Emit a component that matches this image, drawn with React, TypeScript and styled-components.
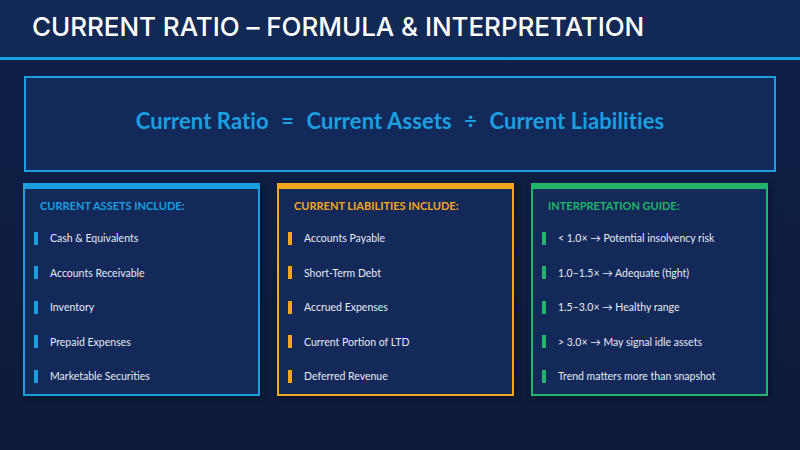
import styled, { createGlobalStyle } from "styled-components";

type Tone = "blue" | "orange" | "green";

const tones: Record<Tone, string> = {
  blue: "#1a9fe0",
  orange: "#f5a71c",
  green: "#22b468",
};

const columns: { tone: Tone; title: string; items: string[] }[] = [
  {
    tone: "blue",
    title: "CURRENT ASSETS INCLUDE:",
    items: [
      "Cash & Equivalents",
      "Accounts Receivable",
      "Inventory",
      "Prepaid Expenses",
      "Marketable Securities",
    ],
  },
  {
    tone: "orange",
    title: "CURRENT LIABILITIES INCLUDE:",
    items: [
      "Accounts Payable",
      "Short-Term Debt",
      "Accrued Expenses",
      "Current Portion of LTD",
      "Deferred Revenue",
    ],
  },
  {
    tone: "green",
    title: "INTERPRETATION GUIDE:",
    items: [
      "< 1.0× → Potential insolvency risk",
      "1.0–1.5× → Adequate (tight)",
      "1.5–3.0× → Healthy range",
      "> 3.0× → May signal idle assets",
      "Trend matters more than snapshot",
    ],
  },
];

export default function App() {
  return (
    <>
      <GlobalStyle />
      <Slide>
        <Header>
          <Title>CURRENT RATIO – FORMULA &amp; INTERPRETATION</Title>
        </Header>
        <Body>
          <FormulaBox>
            <Formula>
              Current Ratio <Op>=</Op> Current Assets <Op>÷</Op> Current Liabilities
            </Formula>
          </FormulaBox>
          <Cards>
            {columns.map(col => (
              <Card key={col.title} $tone={col.tone}>
                <CardTitle $tone={col.tone}>{col.title}</CardTitle>
                <List>
                  {col.items.map(item => (
                    <Item key={item}>
                      <Marker $tone={col.tone} />
                      <span>{item}</span>
                    </Item>
                  ))}
                </List>
              </Card>
            ))}
          </Cards>
        </Body>
      </Slide>
    </>
  );
}

const GlobalStyle = createGlobalStyle`
  html, body {
    margin: 0;
    padding: 0;
    background: #0e1b3a;
  }
  * { box-sizing: border-box; }
`;

const Slide = styled.div`
  width: 800px;
  height: 450px;
  overflow: hidden;
  display: flex;
  flex-direction: column;
  background: linear-gradient(180deg, #10204a 0%, #0d1b3a 100%);
  font-family: Lato, "Open Sans", sans-serif;
`;

const Header = styled.header`
  height: 60px;
  display: flex;
  align-items: center;
  padding: 0 0 4px 32px;
  background: #132955;
  border-bottom: 3px solid #1a9fe0;
`;

const Title = styled.h1`
  margin: 0;
  color: #ffffff;
  font-family: Inter, "Open Sans", sans-serif;
  font-size: 26px;
  font-weight: 500;
  letter-spacing: -0.05px;
`;

const Body = styled.main`
  display: flex;
  flex-direction: column;
  gap: 11px;
  padding: 16px 24px 0 23px;
`;

const FormulaBox = styled.section`
  height: 96px;
  margin-left: 1px;
  display: flex;
  align-items: center;
  justify-content: center;
  background: #13295a;
  border: 2px solid #1a9fe0;
  padding-bottom: 8px;
`;

const Formula = styled.div`
  color: #1a9fe0;
  font-size: 22px;
  font-weight: 700;
  white-space: pre;
  letter-spacing: 0.1px;
`;

const Op = styled.span`
  margin: 0 7px;
`;

const Cards = styled.div`
  display: grid;
  grid-template-columns: repeat(3, 237px);
  gap: 17px;
`;

const Card = styled.section<{ $tone: Tone }>`
  height: 213px;
  background: #13295a;
  border: 2px solid ${({ $tone }) => tones[$tone]};
  border-top: 6px solid ${({ $tone }) => tones[$tone]};
  padding: 8px 0 0 9px;
  box-shadow: 2px 2px 6px rgba(0, 0, 0, 0.35);
`;

const CardTitle = styled.h2<{ $tone: Tone }>`
  margin: 0 0 0 6px;
  color: ${({ $tone }) => tones[$tone]};
  font-size: 11px;
  font-weight: 700;
  line-height: 18px;
`;

const List = styled.ul`
  list-style: none;
  margin: 16px 0 0;
  padding: 0;
  display: flex;
  flex-direction: column;
  gap: 20.5px;
`;

const Item = styled.li`
  display: flex;
  align-items: center;
  gap: 12px;
  height: 14px;
  color: #e6ebf5;
  font-size: 10.5px;
`;

const Marker = styled.i<{ $tone: Tone }>`
  width: 4px;
  height: 13px;
  flex: 0 0 4px;
  background: ${({ $tone }) => tones[$tone]};
`;
